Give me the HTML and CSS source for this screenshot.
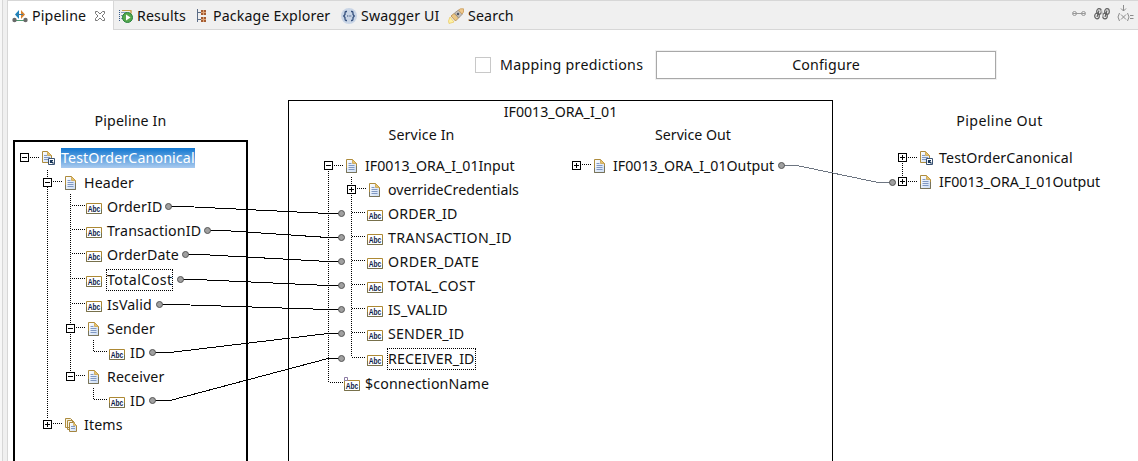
FILE: index.html
```html
<!DOCTYPE html>
<html lang="en">
<head>
<meta charset="utf-8">
<title>Pipeline</title>
<link rel="stylesheet" href="styles.css">
</head>
<body>
<svg class="defs" width="0" height="0">
  <defs>
    <linearGradient id="page" x1="0" y1="0" x2="1" y2="1"><stop offset="0" stop-color="#fff"/><stop offset="1" stop-color="#cbdcf3"/></linearGradient>
    <symbol id="doc" viewBox="0 0 16 16">
      <path d="M2.5 1.5h6l4 4v9h-10z" fill="url(#page)" stroke="#ad8b3d"/>
      <path d="M2.5 10v4.500h10V8" fill="none" stroke="#77735b"/>
      <path d="M8.500 1.500v4h4z" fill="#e6c46c" stroke="#c59b43" stroke-width=".7"/>
      <path d="M4.500 5.500h3M4.500 7.500h6M4.500 9.500h6M4.500 11.500h6" stroke="#8098c3"/>
    </symbol>
    <symbol id="docref" viewBox="0 0 16 16">
      <path d="M2.500 1.500h5l4 4v7h-9z" fill="url(#page)" stroke="#ad8b3d"/>
      <path d="M7.500 1.500v4h4z" fill="#e6c46c" stroke="#c59b43" stroke-width=".7"/>
      <path d="M4 5.500h3M4 7.500h6M4 9.500h5" stroke="#8098c3"/>
      <path d="M8.500 8.500h6v6h-6z" fill="#fff" stroke="#3a5272"/>
      <path d="M10.500 13v-2.500H13M10.500 10.500l3 3" fill="none" stroke="#183659" stroke-width="1.200"/>
    </symbol>
    <symbol id="docs" viewBox="0 0 16 16">
      <path d="M2.500 1.500h5l2 2v7h-7zM4.500 3.500h5l2 2v7h-7z" fill="#f7f3e3" stroke="#ad8b3d"/>
      <path d="M6.500 5.500h4l3 3v6h-7z" fill="url(#page)" stroke="#a4853f"/>
      <path d="M10.500 5.500v3h3z" fill="#e6c46c" stroke="#c59b43" stroke-width=".5"/>
      <path d="M8 9.500h4M8 11.500h4" stroke="#8098c3"/>
    </symbol>
    <symbol id="abc" viewBox="0 0 16 16">
      <path d="M.5 14.500v-10h15v10z" fill="#fff" stroke="#ad8934"/>
      <path d="M.5 10v4.500h15V10" fill="none" stroke="#77704b"/>
      <text x="1.700" y="13" textLength="12.600" lengthAdjust="spacingAndGlyphs" class="glyph">Abc</text>
    </symbol>
  </defs>
</svg>

<div class="window">
  <div class="sash"></div>
  <div class="view">
    <nav class="tabs">
      <div class="tab active">
        <svg width="16" height="16" viewBox="0 0 16 16"><path d="M2 12.500h12" stroke="#4d9a70"/><circle cx="2.500" cy="12" r="2.200" fill="#696969"/><circle cx="13.500" cy="12" r="2.200" fill="#696969"/><path d="M7 2v9L3 6.500z" fill="#1c83bd"/><path d="M9 2v9l4-4.500z" fill="#d8832f"/><path d="M5 6.500h6" stroke="#43799a"/></svg>
        <span>Pipeline</span>
        <svg class="close" width="12" height="12" viewBox="0 0 12 12"><path d="M1.500 1.500h2L6 4l2.500-2.500h2v2L8 6l2.500 2.500v2h-2L6 8l-2.500 2.500h-2v-2L4 6 1.500 3.500z" fill="#fff" stroke="#777"/></svg>
      </div>
      <div class="tab results">
        <svg width="16" height="16" viewBox="0 0 16 16"><path d="M4 2.500h9v8M13 2v3" fill="none" stroke="#c5a051"/><path d="M1.500 2v12" stroke="#355a8b" stroke-dasharray="1 1"/><path d="M3 4.500h6M3 7.500h4M3 10.500h4" stroke="#849dbd"/><circle cx="9.500" cy="9.500" r="5" fill="#56a84d" stroke="#26823c"/><path d="M8 6.500l4.500 3L8 12.500z" fill="#fff"/></svg>
        <span>Results</span>
      </div>
      <div class="tab package">
        <svg width="16" height="16" viewBox="0 0 16 16"><path d="M2.500 1v13M2.500 4.500h4M2.500 11.500h4" stroke="#5b6c86" fill="none"/><path d="M6 2h5v5H6zM6 9h5v5H6z" fill="#a35c32"/><path d="M8.500 2v5M8.500 9v5M6 4.500h5M6 11.500h5" stroke="#dfa477"/></svg>
        <span>Package Explorer</span>
      </div>
      <div class="tab swagger">
        <svg width="16" height="16" viewBox="0 0 16 16"><circle cx="8" cy="8" r="8" fill="#c9d5e6"/><path d="M6 3.500H5q-1 0-1 1.500v1.500L2.700 8 4 9.500V11q0 1.500 1 1.500h1M10 3.500h1q1 0 1 1.500v1.500L13.300 8 12 9.500V11q0 1.500-1 1.500h-1" fill="none" stroke="#35507d" stroke-width="1.300"/><path d="M6 8h1M7.700 8h1M9.300 8h1" stroke="#35507d"/></svg>
        <span>Swagger UI</span>
      </div>
      <div class="tab search">
        <svg width="17" height="16" viewBox="0 0 17 16"><path d="M2 9l4 5-5 1.500L.5 13z" fill="#fff2a4" stroke="#e8c55c" stroke-width=".7"/><path d="M3 8l3-2.500 5 4L7.500 13z" fill="#ebc785" stroke="#b2884b" stroke-width=".8"/><path d="M6.500 5l4-3 4 4-4 4z" fill="#c4bfb9" stroke="#8d877f" stroke-width=".8"/><path d="M10.500 2l2-1.200h3V4l-1.500 2z" fill="#f0c98d" stroke="#c99b58" stroke-width=".8"/><circle cx="10" cy="6" r="1.200" fill="#4c5364"/></svg>
        <span>Search</span>
      </div>
      <div class="tools">
        <svg width="16" height="16" viewBox="0 0 16 16"><g fill="none" stroke="#999"><circle cx="3.500" cy="7.500" r="2"/><circle cx="12.500" cy="7.500" r="2"/><path d="M2 7.500h12"/></g></svg>
        <svg width="18" height="16" viewBox="0 0 18 16"><g fill="none" stroke="#606060" stroke-width="1.200"><ellipse cx="6" cy="5.500" rx="2.300" ry="2.800"/><ellipse cx="4" cy="10" rx="2.300" ry="2.800"/><ellipse cx="14" cy="5.500" rx="2.300" ry="2.800"/><ellipse cx="12" cy="10" rx="2.300" ry="2.800"/><path d="M6 4.500l-2 6.500M14 4.500l-2 6.500"/><path d="M8.500 4l1.500 7" stroke="#bbb"/></g></svg>
        <svg width="17" height="18" viewBox="0 0 17 18"><g fill="none" stroke="#8c8c8c"><path d="M6.500 0v6M4 3.500l2.500 2.500L9 3.500M2.500 8q-3 4 0 8M10.500 8q3 4 0 8M4 9.500l5 5M9 9.500l-5 5M13 10.500h3.500M13 13.500h3.500"/></g></svg>
      </div>
    </nav>

    <main class="editor">
      <div class="options">
        <label class="predict"><span class="box"></span><span class="caption">Mapping predictions</span></label>
        <button class="configure" type="button">Configure</button>
      </div>

      <div class="mapper">
        <section class="pipeline-in">
          <h2>Pipeline In</h2>
          <div class="tree frame">
            <div class="row"><i class="toggle"></i><svg class="icon"><use href="#docref"/></svg><span class="selected">TestOrderCanonical</span></div>
            <div class="row d1 gap"><i class="toggle"></i><svg class="icon"><use href="#doc"/></svg><span>Header</span></div>
            <div class="row d2"><i></i><svg class="icon"><use href="#abc"/></svg><span>OrderID</span></div>
            <div class="row d2"><i></i><svg class="icon"><use href="#abc"/></svg><span>TransactionID</span></div>
            <div class="row d2"><i></i><svg class="icon"><use href="#abc"/></svg><span>OrderDate</span></div>
            <div class="row d2 gap"><i></i><svg class="icon"><use href="#abc"/></svg><span class="focus wide">TotalCost</span></div>
            <div class="row d2 gap"><i></i><svg class="icon"><use href="#abc"/></svg><span>IsValid</span></div>
            <div class="row d2"><i class="toggle"></i><svg class="icon"><use href="#doc"/></svg><span>Sender</span></div>
            <div class="row d3"><i></i><svg class="icon"><use href="#abc"/></svg><span>ID</span></div>
            <div class="row d2"><i class="toggle"></i><svg class="icon"><use href="#doc"/></svg><span>Receiver</span></div>
            <div class="row d3"><i></i><svg class="icon"><use href="#abc"/></svg><span>ID</span></div>
            <div class="row d1"><i class="toggle plus"></i><svg class="icon"><use href="#docs"/></svg><span>Items</span></div>
          </div>
        </section>

        <section class="service">
          <h1>IF0013_ORA_I_01</h1>
          <div class="sides">
            <div class="side-in">
              <h2>Service In</h2>
              <div class="tree">
                <div class="row"><i class="toggle"></i><svg class="icon"><use href="#doc"/></svg><span class="tight">IF0013_ORA_I_01Input</span></div>
                <div class="row d1"><i class="toggle plus"></i><svg class="icon"><use href="#doc"/></svg><span class="tight">overrideCredentials</span></div>
                <div class="row d1"><i></i><svg class="icon"><use href="#abc"/></svg><span>ORDER_ID</span></div>
                <div class="row d1"><i></i><svg class="icon"><use href="#abc"/></svg><span class="wide">TRANSACTION_ID</span></div>
                <div class="row d1"><i></i><svg class="icon"><use href="#abc"/></svg><span class="wide">ORDER_DATE</span></div>
                <div class="row d1"><i></i><svg class="icon"><use href="#abc"/></svg><span class="wide">TOTAL_COST</span></div>
                <div class="row d1"><i></i><svg class="icon"><use href="#abc"/></svg><span>IS_VALID</span></div>
                <div class="row d1"><i></i><svg class="icon"><use href="#abc"/></svg><span>SENDER_ID</span></div>
                <div class="row d1 gap"><i></i><svg class="icon"><use href="#abc"/></svg><span class="focus">RECEIVER_ID</span></div>
                <div class="row gap"><i></i><svg class="icon"><use href="#abc"/><path d="M.5 1.500h3v3h-3z" fill="#fff" stroke="#8c7ba4"/></svg><span>$connectionName</span></div>
              </div>
            </div>
            <div class="side-out">
              <h2 class="tight">Service Out</h2>
              <div class="tree">
                <div class="row"><i class="toggle plus"></i><svg class="icon"><use href="#doc"/></svg><span class="tight">IF0013_ORA_I_01Output</span></div>
              </div>
            </div>
          </div>
        </section>

        <section class="pipeline-out">
          <h2>Pipeline Out</h2>
          <div class="tree">
            <div class="row"><i class="toggle plus"></i><svg class="icon"><use href="#docref"/></svg><span>TestOrderCanonical</span></div>
            <div class="row"><i class="toggle plus"></i><svg class="icon"><use href="#doc"/></svg><span class="tight">IF0013_ORA_I_01Output</span></div>
          </div>
        </section>
      </div>
    </main>
  </div>
</div>

<svg class="links" width="1138" height="461" viewBox="0 0 1138 461">
  <g class="dots">
    <path d="M47.500 170v7M47.500 187v232M70.500 194v129M70.500 332v39M93.500 340v12M93.500 388v12M328.500 171v212M351.500 177v7M351.500 195v162M902.500 163v14"/>
    <path d="M30 157.500h10M53 181.500h10M72 205.500h13M72 229.500h13M72 253.500h13M72 278.500h13M72 303.500h13M76 327.500h10M94 351.500h13M76 375.500h10M94 399.500h13M53 423.500h10"/>
    <path d="M334 165.500h10M357 188.500h10M352 212.500h14M352 236.500h14M352 260.500h14M352 284.500h14M352 308.500h14M352 332.500h14M352 357.500h14M330 382.500h13M582 164.500h10M908 157.500h10M908 181.500h10"/>
  </g>
  <g class="wires">
    <path d="M168 206.500h16L328 213.500h13"/>
    <path d="M207 230.500h16L328 237.500h13"/>
    <path d="M185 254.500h16L328 261.500h13"/>
    <path d="M180 279.500h16L328 285.500h13"/>
    <path d="M159 304.500h16L328 309.500h13"/>
    <path d="M152 352.500h18L328 333.500h13"/>
    <path d="M152 400.500h18L328 358.500h13"/>
    <path class="soft" d="M781 165.500h16L878 182.500h14"/>
  </g>
  <g class="ports">
    <circle cx="168.500" cy="206.500" r="3"/><circle cx="207.500" cy="230.500" r="3"/><circle cx="185.500" cy="254.500" r="3"/><circle cx="180.500" cy="279.500" r="3"/><circle cx="159.500" cy="304.500" r="3"/><circle cx="152.500" cy="352.500" r="3"/><circle cx="152.500" cy="400.500" r="3"/>
    <circle cx="341.500" cy="213.500" r="3"/><circle cx="341.500" cy="237.500" r="3"/><circle cx="341.500" cy="261.500" r="3"/><circle cx="341.500" cy="285.500" r="3"/><circle cx="341.500" cy="309.500" r="3"/><circle cx="341.500" cy="333.500" r="3"/><circle cx="341.500" cy="358.500" r="3"/>
    <circle cx="781.500" cy="165.500" r="3"/><circle cx="892.500" cy="182.500" r="3"/>
  </g>
</svg>
</body>
</html>
```
FILE: styles.css
```css
* { box-sizing: border-box; }
body { margin: 0; height: 461px; overflow: hidden; background: #fff; color: #111; font: 14.2px/20px "Noto Sans", "Open Sans", sans-serif; letter-spacing: .14px; }
.defs { display: block; position: absolute; }
.glyph { font: bold 9px "Liberation Sans", sans-serif; fill: #0c1a48; letter-spacing: 0; }
.tight { letter-spacing: 0; }
.wide { letter-spacing: .42px; }
.window { display: flex; height: 461px; }
.sash { width: 8px; background: #f0f0f0; border-right: 1px solid #d7d7d7; box-shadow: inset 2px 0 #f7f7f7, inset 3px 0 #d7d7d7; }
.view { flex: 1; min-width: 0; }

.tabs { display: flex; height: 30px; background: #f0f0f0; border-top: 1px solid #d7d7d7; border-bottom: 1px solid #d7d7d7; }
.tab { display: flex; align-items: center; gap: 4px; height: 29px; padding-top: 1px; white-space: nowrap; }
.tab svg { flex: none; }
.active { width: 106px; padding-left: 4px; background: #fff; border-right: 1px solid #d7d7d7; }
.active .close { margin-left: auto; margin-right: 7px; }
.results { width: 81px; padding-left: 4px; gap: 3px; }
.package { width: 146px; gap: 2px; }
.swagger { width: 107px; }
.search { gap: 3px; }
.tools { display: flex; align-items: center; gap: 6px; margin-left: auto; padding-right: 4px; padding-bottom: 2px; }

.options { display: flex; height: 70px; padding: 21px 0 0 467px; }
.predict { display: flex; align-items: center; gap: 9px; width: 181px; height: 28px; white-space: nowrap; }
.box { width: 16px; height: 16px; border: 1px solid #c8c8c8; }
.caption { letter-spacing: .3px; }
.configure { width: 340px; height: 28px; padding: 0; border: 1px solid #a8a8a8; background: #fff; color: #111; font: inherit; letter-spacing: .2px; box-shadow: 0 0 0 1px #f0f0f0; }

.mapper { display: flex; height: 361px; }
h1, h2 { margin: 0; font: inherit; text-align: center; white-space: nowrap; }
h1 { letter-spacing: 0; }
.pipeline-in { width: 235px; margin-left: 5px; padding-top: 11px; }
.pipeline-in h2 { height: 29px; }
.frame { height: 321px; padding: 4px 0 0 5px; border: solid #000; border-width: 2px 2px 0; }
.service { width: 545px; margin-left: 40px; border: solid #000; border-width: 1px 1px 0; padding-top: 1px; }
.service h1 { height: 23px; }
.sides { display: flex; }
.side-in { width: 248px; padding-left: 35px; }
.side-in h2 { width: 195px; height: 29px; }
.side-out { padding-left: 35px; }
.side-out h2 { width: 242px; height: 29px; }
.pipeline-out { margin-left: 65px; padding-top: 11px; }
.pipeline-out h2 { width: 203px; height: 35px; letter-spacing: .4px; }

.row { display: flex; align-items: center; height: 24px; white-space: nowrap; }
.row i { flex: none; width: 9px; height: 9px; margin: -2px 11px 0 0; }
.row .toggle { border: 1px solid #000; background: linear-gradient(#000, #000) center / 5px 1px no-repeat; }
.row .plus { background: linear-gradient(#000, #000) center / 5px 1px no-repeat, linear-gradient(#000, #000) center / 1px 5px no-repeat; }
.icon { flex: none; width: 16px; height: 16px; margin-right: 5px; }
.row span { line-height: 20px; }
.d1 { padding-left: 23px; }
.d2 { padding-left: 46px; }
.d3 { padding-left: 69px; }
.gap { margin-top: 1px; }
.selected { background: linear-gradient(#1177d1, #a9caef); color: #fff; }
.focus { outline: 1px dotted #000; }

/* Connections run across the panels, above all trees. */
.links { position: absolute; inset: 0; pointer-events: none; }
.links path { fill: none; stroke: #000; shape-rendering: crispEdges; }
.dots path { stroke-dasharray: 1 1; }
.links .soft { stroke: #6d7581; }
.ports circle { fill: #a0a0a0; stroke: #555; }
```
